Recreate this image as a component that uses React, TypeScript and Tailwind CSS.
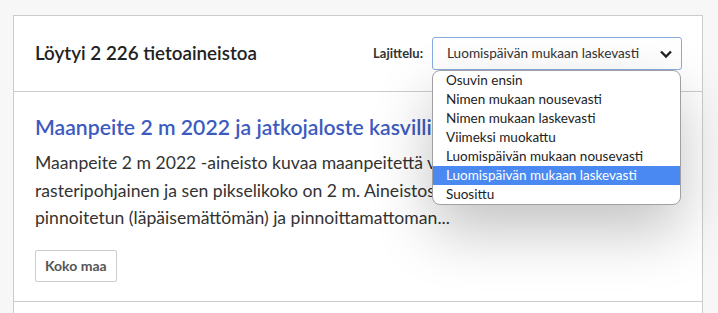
import React from 'react';

const OPTIONS = [
  'Osuvin ensin',
  'Nimen mukaan nousevasti',
  'Nimen mukaan laskevasti',
  'Viimeksi muokattu',
  'Luomispäivän mukaan nousevasti',
  'Luomispäivän mukaan laskevasti',
  'Suosittu',
];

const SELECTED = 5;

const App: React.FC = () => {
  return (
    <div className="h-[313px] w-full overflow-hidden bg-[#f7f7f7] pt-[15px] pl-[13px] pr-[15px] font-['Lato','Liberation_Sans',sans-serif] text-[#222]">
      <div className="bg-white border-x border-t border-[#ccc]">
        {/* Header */}
        <div className="flex h-[76px] items-center justify-between border-b border-[#ccc] pl-[21px] pr-[20px]">
          <h1 className="text-[18.8px] font-semibold text-[#222]">Löytyi 2 226 tietoaineistoa</h1>
          <div className="flex items-center gap-[9px]">
            <span className="text-[13px] font-bold text-[#333]">Lajittelu:</span>
            <div className="relative">
              <div className="flex h-[33px] w-[250px] items-center justify-between rounded-[3px] border border-[#86acde] pl-[14px] pr-[8px] text-[13.6px] text-[#333]">
                <span>Luomispäivän mukaan laskevasti</span>
                <svg width="14" height="10" viewBox="0 0 14 10" className="text-[#222]">
                  <path d="M2 2.5 L7 7.5 L12 2.5" fill="none" stroke="currentColor" strokeWidth="2.4" />
                </svg>
              </div>
              <ul className="absolute left-0 top-[33px] z-10 w-[249px] overflow-hidden rounded-[8px] border border-[#a0a0a0] bg-white shadow-[0_26px_60px_rgba(0,0,0,0.24)]">
                {OPTIONS.map((o, i) => (
                  <li
                    key={o}
                    className={`h-[19px] pl-[13px] text-[13.5px] leading-[19px] ${
                      i === SELECTED ? 'bg-[#4a88f2] text-white' : 'text-[#222]'
                    }`}
                  >
                    {o}
                  </li>
                ))}
              </ul>
            </div>
          </div>
        </div>

        {/* Result */}
        <div className="border-b border-[#ccc] px-[21px] pt-[21px] pb-[19px]">
          <h2 className="whitespace-nowrap text-[21.2px] font-semibold leading-[28px] text-[#3d5bbf]">
            Maanpeite 2 m 2022 ja jatkojaloste kasvillisuudesta
          </h2>
          <p className="mt-[8px] whitespace-nowrap text-[17.6px] leading-[27.5px] text-[#333]">
            Maanpeite 2 m 2022 -aineisto kuvaa maanpeitettä valtakunnallisesti. Aineisto on
            <br />
            rasteripohjainen ja sen pikselikoko on 2 m. Aineistossa on eroteltu
            <br />
            pinnoitetun (läpäisemättömän) ja pinnoittamattoman...
          </p>
          <div className="mt-[18px]">
            <span className="inline-flex h-[32px] items-center rounded-[2px] border border-[#ccc] px-[9px] text-[14px] font-bold text-[#555]">
              Koko maa
            </span>
          </div>
        </div>
        <div className="h-[20px]" />
      </div>
    </div>
  );
};

export default App;
